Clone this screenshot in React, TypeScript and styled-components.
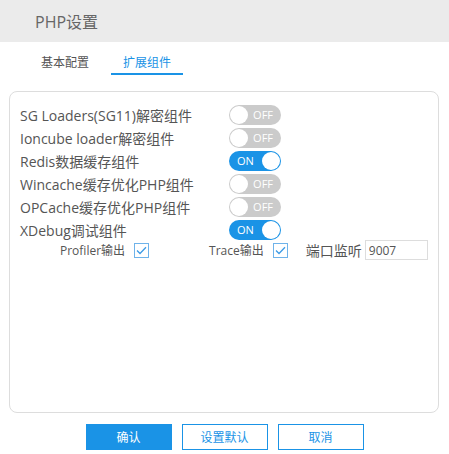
import React, { useState } from 'react';
import styled, { createGlobalStyle } from 'styled-components';

const GlobalStyle = createGlobalStyle`
  html, body {
    margin: 0;
    padding: 0;
    background: #fff;
  }
  body {
    font-family: "Open Sans", "Noto Sans CJK SC", sans-serif;
    color: #555;
  }
`;

const BLUE = '#1a93e6';

const Page = styled.div`
  width: 449px;
  height: 454px;
  display: flex;
  flex-direction: column;
`;

const Header = styled.div`
  height: 42px;
  background: #ebebeb;
  display: flex;
  align-items: center;
  padding-left: 35px;
  font-size: 16px;
  color: #666;
`;

const Tabs = styled.div`
  display: flex;
  gap: 10px;
  padding: 11px 0 0 29px;
`;

const Tab = styled.div<{ $active?: boolean }>`
  width: 72px;
  text-align: center;
  font-size: 12px;
  line-height: 20px;
  color: ${(p) => (p.$active ? BLUE : '#555')};
  border-bottom: 2px solid ${(p) => (p.$active ? BLUE : 'transparent')};
`;

const Panel = styled.div`
  margin: 16px 0 0 9px;
  width: 430px;
  height: 322px;
  box-sizing: border-box;
  border: 1px solid #ddd;
  border-radius: 8px;
  padding: 11px 0 0 10px;
`;

const Row = styled.div`
  display: flex;
  align-items: center;
  height: 23px;
`;

const Label = styled.div`
  width: 209px;
  font-size: 14px;
  color: #555;
  white-space: nowrap;
`;

const Toggle = styled.button<{ $on: boolean }>`
  position: relative;
  width: 52px;
  height: 20px;
  border: none;
  border-radius: 10px;
  background: ${(p) => (p.$on ? BLUE : '#cbcbcb')};
  cursor: pointer;
  font-family: inherit;
  font-size: 11px;
  color: #fff;
  display: flex;
  align-items: center;
  justify-content: ${(p) => (p.$on ? 'flex-start' : 'flex-end')};
  padding: ${(p) => (p.$on ? '0 0 0 8px' : '0 8px 0 0')};
  box-sizing: border-box;
`;

const Knob = styled.span<{ $on: boolean }>`
  position: absolute;
  top: 1px;
  left: ${(p) => (p.$on ? '33px' : '1px')};
  width: 18px;
  height: 18px;
  border-radius: 50%;
  background: #fff;
`;

const SubRow = styled.div`
  display: flex;
  align-items: center;
  height: 22px;
  margin-top: -2px;
  padding-left: 40px;
`;

const SubLabel = styled.span<{ $size?: number; $ml?: number }>`
  font-size: ${(p) => p.$size ?? 12}px;
  margin-left: ${(p) => p.$ml ?? 0}px;
  color: #555;
  white-space: nowrap;
`;

const Check = styled.span`
  margin-left: 9px;
  width: 15px;
  height: 15px;
  box-sizing: border-box;
  border: 1px solid #6fb3ea;
  display: inline-flex;
  align-items: center;
  justify-content: center;
`;

const PortInput = styled.input`
  margin-left: 3px;
  width: 63px;
  height: 20px;
  box-sizing: border-box;
  border: 1px solid #ddd;
  padding: 0 3px;
  font-family: inherit;
  font-size: 12px;
  color: #555;
  outline: none;
`;

const Footer = styled.div`
  display: flex;
  justify-content: center;
  gap: 10px;
  margin-top: 11px;
`;

const Btn = styled.button<{ $primary?: boolean }>`
  width: 86px;
  height: 26px;
  box-sizing: border-box;
  border: 1px solid ${BLUE};
  background: ${(p) => (p.$primary ? BLUE : '#fff')};
  color: ${(p) => (p.$primary ? '#fff' : BLUE)};
  font-family: inherit;
  font-size: 12px;
  cursor: pointer;
`;

const items = [
  { name: 'SG Loaders(SG11)解密组件', on: false },
  { name: 'Ioncube loader解密组件', on: false },
  { name: 'Redis数据缓存组件', on: true },
  { name: 'Wincache缓存优化PHP组件', on: false },
  { name: 'OPCache缓存优化PHP组件', on: false },
  { name: 'XDebug调试组件', on: true },
];

function CheckMark() {
  return (
    <svg width="11" height="9" viewBox="0 0 11 9">
      <path d="M1 4.5 L4 7.5 L10 1.2" fill="none" stroke="#3d9be6" strokeWidth="1.3" />
    </svg>
  );
}

export default function App() {
  const [state, setState] = useState(items.map((i) => i.on));

  return (
    <Page>
      <GlobalStyle />
      <Header>PHP设置</Header>
      <Tabs>
        <Tab>基本配置</Tab>
        <Tab $active>扩展组件</Tab>
      </Tabs>
      <Panel>
        {items.map((item, i) => (
          <Row key={item.name}>
            <Label>{item.name}</Label>
            <Toggle
              $on={state[i]}
              onClick={() => setState(state.map((v, j) => (j === i ? !v : v)))}
            >
              {state[i] ? 'ON' : 'OFF'}
              <Knob $on={state[i]} />
            </Toggle>
          </Row>
        ))}
        <SubRow>
          <SubLabel>Profiler输出</SubLabel>
          <Check>
            <CheckMark />
          </Check>
          <SubLabel $ml={60}>Trace输出</SubLabel>
          <Check>
            <CheckMark />
          </Check>
          <SubLabel $size={14} $ml={18}>端口监听</SubLabel>
          <PortInput defaultValue="9007" />
        </SubRow>
      </Panel>
      <Footer>
        <Btn $primary>确认</Btn>
        <Btn>设置默认</Btn>
        <Btn>取消</Btn>
      </Footer>
    </Page>
  );
}
